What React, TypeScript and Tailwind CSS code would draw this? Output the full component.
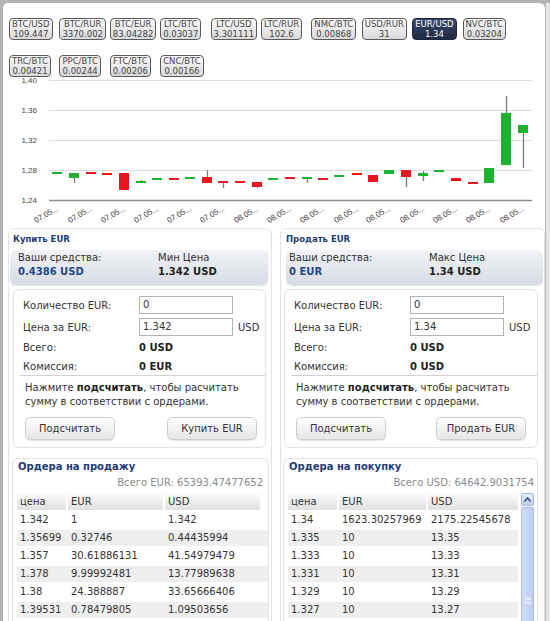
import React from "react";

type Candle = [number, "g" | "r", number, number, number?, number?];

const candles: Candle[] = [
  [57, "g", 172, 174],
  [74, "g", 173, 178, 173, 183],
  [91, "r", 172, 174],
  [107, "r", 173, 175],
  [124, "r", 173, 190],
  [141, "g", 181, 183, 180, 183],
  [157, "g", 178, 180],
  [174, "r", 178, 180],
  [190, "g", 177, 179],
  [207, "r", 177, 183, 170, 183],
  [223, "r", 181, 183, 181, 188],
  [240, "r", 181, 183],
  [257, "r", 182, 187, 182, 188],
  [273, "g", 178, 180],
  [290, "r", 177, 179],
  [307, "g", 177, 179, 177, 183],
  [323, "r", 178, 180],
  [339, "g", 175, 177],
  [357, "r", 173, 175],
  [373, "r", 175, 182],
  [389, "g", 170, 174],
  [406, "r", 170, 177, 170, 187],
  [423, "g", 173, 176, 171, 181],
  [439, "g", 170, 172],
  [456, "r", 178, 181],
  [473, "r", 182, 184],
  [489, "g", 168, 183],
  [506, "g", 113, 165, 96, 165],
  [523, "g", 125, 133, 125, 168],
];

const row1: [string, string][] = [
  ["BTC/USD", "109.447"],
  ["BTC/RUR", "3370.002"],
  ["BTC/EUR", "83.04282"],
  ["LTC/BTC", "0.03037"],
  ["LTC/USD", "3.301111"],
  ["LTC/RUR", "102.6"],
  ["NMC/BTC", "0.00868"],
  ["USD/RUR", "31"],
  ["EUR/USD", "1.34"],
  ["NVC/BTC", "0.03204"],
];
const row2: [string, string][] = [
  ["TRC/BTC", "0.00421"],
  ["PPC/BTC", "0.00244"],
  ["FTC/BTC", "0.00206"],
  ["CNC/BTC", "0.00166"],
];

function Tab({ pair, value }: { pair: string; value: string }) {
  const active = pair === "EUR/USD";
  return (
    <div className="w-[50.4px] shrink-0">
      <div
        className={
          active
            ? "inline-flex flex-col items-center justify-center h-[22px] px-[2px] rounded-[4px] border border-[#1c2340] bg-gradient-to-b from-[#3a4668] to-[#1f2845] text-white text-[8.5px] leading-[10px]"
            : "inline-flex flex-col items-center justify-center h-[22px] px-[2px] rounded-[4px] border border-[#5a5a5a] bg-gradient-to-b from-[#fbfbfb] to-[#d9d9d9] text-[#444] text-[8.5px] leading-[10px]"
        }
      >
        <span>{pair}</span>
        <span>{value}</span>
      </div>
    </div>
  );
}

function Chart() {
  const grid = [80, 110, 140, 170];
  const ylabels = ["1,40", "1,36", "1,32", "1,28", "1,24"];
  return (
    <svg width={543} height={166} viewBox="3 61 543 166" className="block">
      {grid.map((y) => (
        <line key={y} x1={49} x2={532} y1={y + 0.5} y2={y + 0.5} stroke="#dcdcdc" strokeWidth={1} />
      ))}
      {ylabels.map((t, i) => (
        <text
          key={t}
          x={37}
          y={80 + i * 30 + 3}
          textAnchor="end"
          fontSize={8}
          fill="#444"
          fontFamily="'Liberation Sans', Arial, sans-serif"
        >
          {t}
        </text>
      ))}
      {candles.map(([cx, c, t, b, wt, wb], i) => (
        <g key={i}>
          {wt !== undefined && wb !== undefined && (
            <line x1={cx + 0.5} x2={cx + 0.5} y1={wt} y2={wb} stroke="#7a7a7a" strokeWidth={1.3} />
          )}
          <rect
            x={cx - 5}
            y={t}
            width={10}
            height={Math.max(b - t, 2)}
            fill={c === "g" ? "#1cb331" : "#e8161e"}
          />
        </g>
      ))}
      <line x1={49} x2={532} y1={200.5} y2={200.5} stroke="#8c8c8c" strokeWidth={1.3} />
      {candles
        .filter((_, i) => i % 2 === 0)
        .map(([cx], i) => (
          <text
            key={i}
            transform={`translate(${cx + 2}, 210) rotate(-30)`}
            textAnchor="end"
            fontSize={8}
            fill="#444"
            fontFamily="'Liberation Sans', Arial, sans-serif"
          >
            {i < 6 ? "07.05..." : "08.05..."}
          </text>
        ))}
    </svg>
  );
}

type TradeProps = {
  title: string;
  fundsValue: string;
  priceLabel: string;
  priceValue: string;
  price: string;
  commission: string;
  action: string;
  right?: boolean;
};

function TradeForm(p: TradeProps) {
  return (
    <>
      <div className={"h-[20px] flex items-center text-[8.5px] font-bold text-[#1d3c75] " + (p.right ? "pl-[5px]" : "pl-[4px]")}>
        {p.title}
      </div>
      <div
        className={
          "mt-[1px] h-[35px] rounded-[6px] bg-gradient-to-b from-[#f1f3f6] to-[#d7dbe3] shadow-[0_1px_1px_rgba(0,0,0,0.12)] pt-[1px] grid grid-cols-[140px_1fr] leading-[14px] text-[10px] " +
          (p.right ? "ml-[5px] mr-[1px] pl-[3px]" : "ml-[1px] mr-[3px] pl-[8px]")
        }
      >
        <div>
          <div className="text-[#333]">Ваши средства:</div>
          <div className="font-bold text-[#22488a]">{p.fundsValue}</div>
        </div>
        <div>
          <div className="text-[#333]">{p.priceLabel}</div>
          <div className="font-bold text-[#222]">{p.priceValue}</div>
        </div>
      </div>
      <div
        className={
          "mt-[4px] border border-[#e3e3e3] rounded-[6px] pb-[7px] text-[10px] text-[#333] " +
          (p.right ? "ml-[3px] mr-[6px]" : "ml-[4px] mr-[5px]")
        }
      >
        <div className="mt-[6px] flex items-center h-[18px] pl-[9px]">
          <div className="w-[116px]">Количество EUR:</div>
          <div className="w-[94px] h-[18px] border border-[#b4b4b4] bg-white px-[3px] leading-[16px] text-[#333]">0</div>
        </div>
        <div className="mt-[4px] flex items-center h-[18px] pl-[9px]">
          <div className="w-[116px]">Цена за EUR:</div>
          <div className="w-[94px] h-[18px] border border-[#b4b4b4] bg-white px-[3px] leading-[16px] text-[#333]">{p.price}</div>
          <div className="ml-[5px]">USD</div>
        </div>
        <div className="mt-[4px] flex items-center h-[14px] pl-[9px]">
          <div className="w-[116px]">Всего:</div>
          <div className="font-bold text-[#222]">0 USD</div>
        </div>
        <div className="mt-[5px] flex items-center h-[14px] pl-[9px]">
          <div className="w-[116px]">Комиссия:</div>
          <div className="font-bold text-[#222]">{p.commission}</div>
        </div>
        <div className="mt-[2px] ml-[6px] border-t border-[#d2d2d2]" />
        <div className="mt-[5px] pl-[11px] leading-[14px]">
          Нажмите <b className="text-[#222]">подсчитать</b>, чтобы расчитать
          <br />
          сумму в соответствии с ордерами.
        </div>
        <div className={"mt-[8px] flex justify-between " + (p.right ? "pl-[11px] pr-[11px]" : "pl-[11px] pr-[8px]")}>
          <div className="w-[90px] h-[23px] rounded-[5px] border border-[#cfcfcf] bg-gradient-to-b from-white to-[#e6e6e6] shadow-[0_1px_1px_rgba(0,0,0,0.1)] flex items-center justify-center">
            Подсчитать
          </div>
          <div className="w-[90px] h-[23px] rounded-[5px] border border-[#cfcfcf] bg-gradient-to-b from-white to-[#e6e6e6] shadow-[0_1px_1px_rgba(0,0,0,0.1)] flex items-center justify-center">
            {p.action}
          </div>
        </div>
      </div>
    </>
  );
}

function OrderTable({ widths, rows }: { widths: number[]; rows: string[][] }) {
  const head = ["цена", "EUR", "USD"];
  return (
    <div className="flex flex-col gap-[2px] text-[10px] text-[#333]">
      <div className="flex gap-[2px]">
        {head.map((h, i) => (
          <div
            key={h}
            style={{ width: widths[i] }}
            className="h-[16px] leading-[16px] pl-[3px] bg-gradient-to-b from-[#fbfbfb] to-[#e0e0e0]"
          >
            {h}
          </div>
        ))}
      </div>
      {rows.map((r, ri) => (
        <div key={ri} className={"flex gap-[2px] " + (ri % 2 === 1 ? "bg-[#efefef]" : "bg-white")}>
          {r.map((c, i) => (
            <div key={i} style={{ width: widths[i] }} className="h-[16px] leading-[16px] pl-[3px] whitespace-nowrap">
              {c}
            </div>
          ))}
        </div>
      ))}
    </div>
  );
}

const sellRows = [
  ["1.342", "1", "1.342"],
  ["1.35699", "0.32746", "0.44435994"],
  ["1.357", "30.61886131", "41.54979479"],
  ["1.378", "9.99992481", "13.77989638"],
  ["1.38", "24.388887", "33.65666406"],
  ["1.39531", "0.78479805", "1.09503656"],
];
const buyRows = [
  ["1.34", "1623.30257969", "2175.22545678"],
  ["1.335", "10", "13.35"],
  ["1.333", "10", "13.33"],
  ["1.331", "10", "13.31"],
  ["1.329", "10", "13.29"],
  ["1.327", "10", "13.27"],
];

export default function App() {
  return (
    <div className="w-[550px] h-[621px] overflow-hidden bg-[#b3b3b3] pl-[3px] pt-[3px] font-['DejaVu_Sans',sans-serif]">
      <div className="flex h-full">
        <div className="w-[543px] h-[640px] bg-white rounded-tl-[5px] rounded-tr-[6px] border-r border-[#b8b8b8]">
          <div className="h-[58px] pl-[6px] pt-[7px] flex flex-col gap-[7px]">
            <div className="flex">
              {row1.map(([a, b]) => (
                <Tab key={a} pair={a} value={b} />
              ))}
            </div>
            <div className="flex">
              {row2.map(([a, b]) => (
                <Tab key={a} pair={a} value={b} />
              ))}
            </div>
          </div>
          <Chart />
          <div className="mt-[1px] pl-[5px] flex gap-[8px]">
            <div className="w-[264px] h-[420px] border border-[#e4e4e4] rounded-[6px]">
              <TradeForm
                title="Купить EUR"
                fundsValue="0.4386 USD"
                priceLabel="Мин Цена"
                priceValue="1.342 USD"
                price="1.342"
                commission="0 EUR"
                action="Купить EUR"
              />
              <div className="mt-[10px] ml-[3px] mr-[2px] h-[200px] border border-[#e3e3e3] rounded-[6px]">
                <div className="pt-[1px] h-[15px] leading-[14px] pl-[5px] text-[10px] font-bold text-[#1d3c75]">
                  Ордера на продажу
                </div>
                <div className="mt-[2px] h-[14px] leading-[14px] text-right pr-[5px] text-[10px] text-[#8a8a8a]">
                  Всего EUR: 65393.47477652
                </div>
                <div className="mt-[4px] ml-[4px]">
                  <OrderTable widths={[49, 95, 95]} rows={sellRows} />
                </div>
              </div>
            </div>
            <div className="w-[265px] h-[420px] border border-[#e4e4e4] rounded-[6px]">
              <TradeForm
                right
                title="Продать EUR"
                fundsValue="0 EUR"
                priceLabel="Макс Цена"
                priceValue="1.34 USD"
                price="1.34"
                commission="0 USD"
                action="Продать EUR"
              />
              <div className="mt-[10px] ml-[2px] mr-[6px] h-[200px] border border-[#e3e3e3] rounded-[6px]">
                <div className="pt-[1px] h-[15px] leading-[14px] pl-[5px] text-[10px] font-bold text-[#1d3c75]">
                  Ордера на покупку
                </div>
                <div className="mt-[2px] h-[14px] leading-[14px] text-right pr-[3px] text-[10px] text-[#8a8a8a]">
                  Всего USD: 64642.9031754
                </div>
                <div className="mt-[3px] ml-[4px] flex gap-[3px]">
                  <div className="mt-[1px]">
                    <OrderTable widths={[49, 87, 90]} rows={buyRows} />
                  </div>
                  <div className="w-[13px] flex flex-col gap-[1px]">
                    <div className="h-[13px] rounded-[2px] border border-[#a3bae6] bg-gradient-to-b from-[#e4edfd] to-[#bccff5] flex items-center justify-center">
                      <svg width="7" height="5" viewBox="0 0 7 5">
                        <path d="M0.5 4.5 L3.5 1 L6.5 4.5" fill="none" stroke="#2c4a8a" strokeWidth="1.5" />
                      </svg>
                    </div>
                    <div className="h-[140px] rounded-[2px] border border-[#a9bfe9] bg-gradient-to-r from-[#cddcf9] to-[#bcd0f6] flex flex-col items-center pt-[89px] gap-[1px]">
                      <div className="w-[6px] h-[1px] bg-[#eef3fe]" />
                      <div className="w-[6px] h-[1px] bg-[#eef3fe]" />
                      <div className="w-[6px] h-[1px] bg-[#eef3fe]" />
                      <div className="w-[6px] h-[1px] bg-[#eef3fe]" />
                    </div>
                  </div>
                </div>
              </div>
            </div>
          </div>
        </div>
        <div className="flex-1 bg-[#e6e6e6]" />
      </div>
    </div>
  );
}
